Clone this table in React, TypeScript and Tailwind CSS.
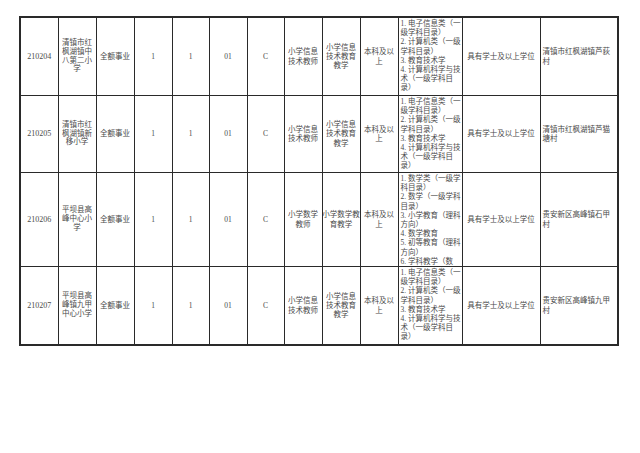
import React from "react";

type Row = {
  h: number;
  code: string;
  school: string[];
  place: string[];
  major: string[];
  subject: string[];
  quals: string[];
};

const rows: Row[] = [
  {
    h: 77,
    code: "210204",
    school: ["清镇市红", "枫湖镇中", "八第二小", "学"],
    major: ["小学信息", "技术教师"],
    subject: ["小学信息", "技术教育", "教学"],
    quals: ["1. 电子信息类（一", "级学科目录）", "2. 计算机类（一级", "学科目录）", "3. 教育技术学", "4. 计算机科学与技", "术（一级学科目", "录）"],
    place: ["清镇市红枫湖镇芦荻", "村"],
  },
  {
    h: 76,
    code: "210205",
    school: ["清镇市红", "枫湖镇新", "移小学"],
    major: ["小学信息", "技术教师"],
    subject: ["小学信息", "技术教育", "教学"],
    quals: ["1. 电子信息类（一", "级学科目录）", "2. 计算机类（一级", "学科目录）", "3. 教育技术学", "4. 计算机科学与技", "术（一级学科目", "录）"],
    place: ["清镇市红枫湖镇芦猫", "塘村"],
  },
  {
    h: 93,
    code: "210206",
    school: ["平坝县高", "峰中心小", "学"],
    major: ["小学数学", "教师"],
    subject: ["小学数学教", "育教学"],
    quals: ["1. 数学类（一级学", "科目录）", "2. 数学（一级学科", "目录）", "3. 小学教育（理科", "方向）", "4. 数学教育", "5. 初等教育（理科", "方向）", "6. 学科教学（数"],
    place: ["贵安新区高峰镇石甲", "村"],
  },
  {
    h: 77,
    code: "210207",
    school: ["平坝县高", "峰镇九甲", "中心小学"],
    major: ["小学信息", "技术教师"],
    subject: ["小学信息", "技术教育", "教学"],
    quals: ["1. 电子信息类（一", "级学科目录）", "2. 计算机类（一级", "学科目录）", "3. 教育技术学", "4. 计算机科学与技", "术（一级学科目", "录）"],
    place: ["贵安新区高峰镇九甲", "村"],
  },
];

const widths = [38, 38, 38, 38, 37, 38, 37, 38, 38, 38, 64, 78, 78];

function Lines({ lines }: { lines: string[] }) {
  return (
    <>
      {lines.map((l, i) => (
        <div key={i} className="whitespace-nowrap">
          {l}
        </div>
      ))}
    </>
  );
}

function Cell({ h, children, left, top }: { h: number; children: React.ReactNode; left?: boolean; top?: boolean }) {
  return (
    <td className="border border-[#2a2a2a] p-0 align-top">
      <div
        className={
          "flex flex-col overflow-hidden " +
          (top ? "justify-start pt-[1px] " : "justify-center ") +
          (left ? "items-start pl-[2px] text-left " : "items-center text-center ")
        }
        style={{ height: h }}
      >
        <div>{children}</div>
      </div>
    </td>
  );
}

export default function App() {
  return (
    <div className="w-[640px] h-[453px] bg-white overflow-hidden">
      <div className="pl-[19px] pt-[16px]">
        <table
          className="table-fixed border-collapse border-2 border-[#2a2a2a] text-[#4a4a4a] text-[7.5px] leading-[9.2px]"
          style={{ width: 599, fontFamily: '"Liberation Serif", "Noto Sans CJK SC", serif' }}
        >
          <colgroup>
            {widths.map((w, i) => (
              <col key={i} style={{ width: w }} />
            ))}
          </colgroup>
          <tbody>
            {rows.map((r) => (
              <tr key={r.code}>
                <Cell h={r.h}>
                  <span className="text-[8px]">{r.code}</span>
                </Cell>
                <Cell h={r.h}>
                  <div className="leading-[8.8px]">
                    <Lines lines={r.school} />
                  </div>
                </Cell>
                <Cell h={r.h}>全额事业</Cell>
                <Cell h={r.h}>1</Cell>
                <Cell h={r.h}>1</Cell>
                <Cell h={r.h}>01</Cell>
                <Cell h={r.h}>C</Cell>
                <Cell h={r.h}>
                  <Lines lines={r.major} />
                </Cell>
                <Cell h={r.h}>
                  <Lines lines={r.subject} />
                </Cell>
                <Cell h={r.h}>
                  <Lines lines={["本科及以", "上"]} />
                </Cell>
                <Cell h={r.h} left top>
                  <Lines lines={r.quals} />
                </Cell>
                <Cell h={r.h}>具有学士及以上学位</Cell>
                <Cell h={r.h} left>
                  <Lines lines={r.place} />
                </Cell>
              </tr>
            ))}
          </tbody>
        </table>
      </div>
    </div>
  );
}
